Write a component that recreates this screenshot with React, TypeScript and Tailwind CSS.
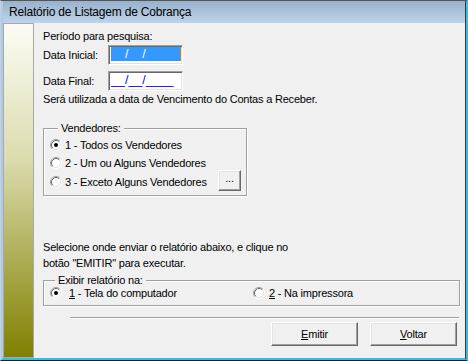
import React from 'react';

function Radio({ checked = false }: { checked?: boolean }) {
  return (
    <svg width="12" height="12" viewBox="0 0 12 12" className="shrink-0">
      <circle cx="6" cy="6" r="5" fill="#ffffff" />
      <path d="M2.11 9.89A5.5 5.5 0 0 1 9.89 2.11" fill="none" stroke="#a0a0a0" strokeWidth="1" />
      <path d="M9.89 2.11A5.5 5.5 0 0 1 2.11 9.89" fill="none" stroke="#ffffff" strokeWidth="1" />
      <path d="M2.82 9.18A4.5 4.5 0 0 1 9.18 2.82" fill="none" stroke="#696969" strokeWidth="1" />
      <path d="M9.18 2.82A4.5 4.5 0 0 1 2.82 9.18" fill="none" stroke="#e3e3e3" strokeWidth="1" />
      {checked && <circle cx="6" cy="6" r="2" fill="#000000" />}
    </svg>
  );
}

const raised =
  'bg-[#f0f0f0] border border-t-white border-l-white border-r-[#696969] border-b-[#696969] shadow-[inset_-1px_-1px_0_#a0a0a0,inset_1px_1px_0_#e3e3e3]';

const sunken =
  'bg-white border border-t-[#a0a0a0] border-l-[#a0a0a0] border-r-white border-b-white shadow-[inset_1px_1px_0_#696969,inset_-1px_-1px_0_#e3e3e3]';

const etched = 'border border-[#a0a0a0] shadow-[inset_1px_1px_0_#ffffff,1px_1px_0_#ffffff]';

export default function App() {
  return (
    <div className="w-[468px] h-[361px] flex flex-col border-t border-t-[#555555] border-l border-l-[#cfcfcf] border-r-2 border-r-[#35bde8] border-b border-b-[#222222] font-['Liberation_Sans',Arial,sans-serif] text-[11px] tracking-[-0.2px] text-black overflow-hidden">
      <div className="flex-1 flex flex-col border-l-2 border-l-[#a9cbee] border-r border-r-[#3a3a3a] border-b-2 border-b-[#35bde8] bg-[#f0f0f0] min-h-0">
        {/* Title bar */}
        <div className="h-[22px] shrink-0 flex items-center pl-[6px] bg-gradient-to-b from-[#99b1ca] to-[#bdd4ec] text-[12px] leading-none">
          Relatório de Listagem de Cobrança
        </div>

        <div className="flex-1 flex min-h-0">
          {/* Side strip */}
          <div className="w-[31px] shrink-0 border border-[#a8a8a8] bg-[linear-gradient(to_bottom,#fcfcf4_0%,#dcdcb0_40%,#808000_100%)]"></div>

          {/* Form */}
          <div className="flex-1 flex flex-col pl-[9px] pr-[5px] pt-[7px] leading-[13px]">
            <div>Período para pesquisa:</div>

            <div className="mt-[2px] h-[20px] flex items-center">
              <span className="w-[65px]">Data Inicial:</span>
              <div className={`w-[75px] h-[20px] ${sunken} pl-[2px] pt-[1px]`}>
                <div className="h-[14px] w-[70px] bg-[#3399ff] border-r border-r-[#d9782b] text-[12.5px] leading-[14px] tracking-normal text-white">
                  <span className="text-[#3399ff]">__</span>/<span className="text-[#3399ff]">__</span>/<span className="text-[#3399ff]">____</span>
                </div>
              </div>
            </div>

            <div className="mt-[6px] h-[20px] flex items-center">
              <span className="w-[65px]">Data Final:</span>
              <div className={`w-[75px] h-[20px] ${sunken} pl-[2px] pt-[1px]`}>
                <div className="text-[12.5px] leading-[14px] tracking-normal text-[#0000ff]">__/__/____</div>
              </div>
            </div>

            <div className="mt-[2px]">Será utilizada a data de Vencimento do Contas a Receber.</div>

            {/* Vendedores group */}
            <div className={`relative mt-[22px] w-[204px] ${etched} pl-[6px] pr-[5px] pt-[7px] pb-[3px]`}>
              <span className="absolute -top-[7px] left-[14px] px-[3px] bg-[#f0f0f0]">Vendedores:</span>
              <div className="h-[18px] flex items-center gap-[3px]">
                <Radio checked />
                <span>1 - Todos os Vendedores</span>
              </div>
              <div className="h-[18px] flex items-center gap-[3px]">
                <Radio />
                <span>2 - Um ou Alguns Vendedores</span>
              </div>
              <div className="h-[20px] flex items-center gap-[3px]">
                <Radio />
                <span>3 - Exceto Alguns Vendedores</span>
                <button className={`ml-auto -mt-[4px] w-[23px] h-[21px] ${raised} leading-none pb-[3px]`}>...</button>
              </div>
            </div>

            <div className="mt-[43px] leading-[16px]">
              Selecione onde enviar o relatório abaixo, e clique no
              <br />
              botão "EMITIR" para executar.
            </div>

            {/* Exibir group */}
            <div className={`relative mt-[9px] ${etched} pl-[6px] pt-[5px] pb-[5px]`}>
              <span className="absolute -top-[7px] left-[11px] px-[3px] bg-[#f0f0f0]">Exibir relatório na:</span>
              <div className="grid grid-cols-[203px_1fr] h-[14px] items-center">
                <div className="flex items-center gap-[7px]">
                  <Radio checked />
                  <span>
                    <span className="underline">1</span> - Tela do computador
                  </span>
                </div>
                <div className="flex items-center gap-[4px]">
                  <Radio />
                  <span>
                    <span className="underline">2</span> - Na impressora
                  </span>
                </div>
              </div>
            </div>

            {/* Separator */}
            <div className="mt-[11px] ml-[27px] mr-[1px] h-[2px] border-t border-t-[#a0a0a0] border-b border-b-white"></div>

            {/* Buttons */}
            <div className="mt-[3px] mr-[3px] flex justify-end gap-[12px]">
              <button className={`w-[87px] h-[24px] ${raised} leading-none`}>
                <span className="underline">E</span>mitir
              </button>
              <button className={`w-[87px] h-[24px] ${raised} leading-none`}>
                <span className="underline">V</span>oltar
              </button>
            </div>
          </div>
        </div>
      </div>
    </div>
  );
}
